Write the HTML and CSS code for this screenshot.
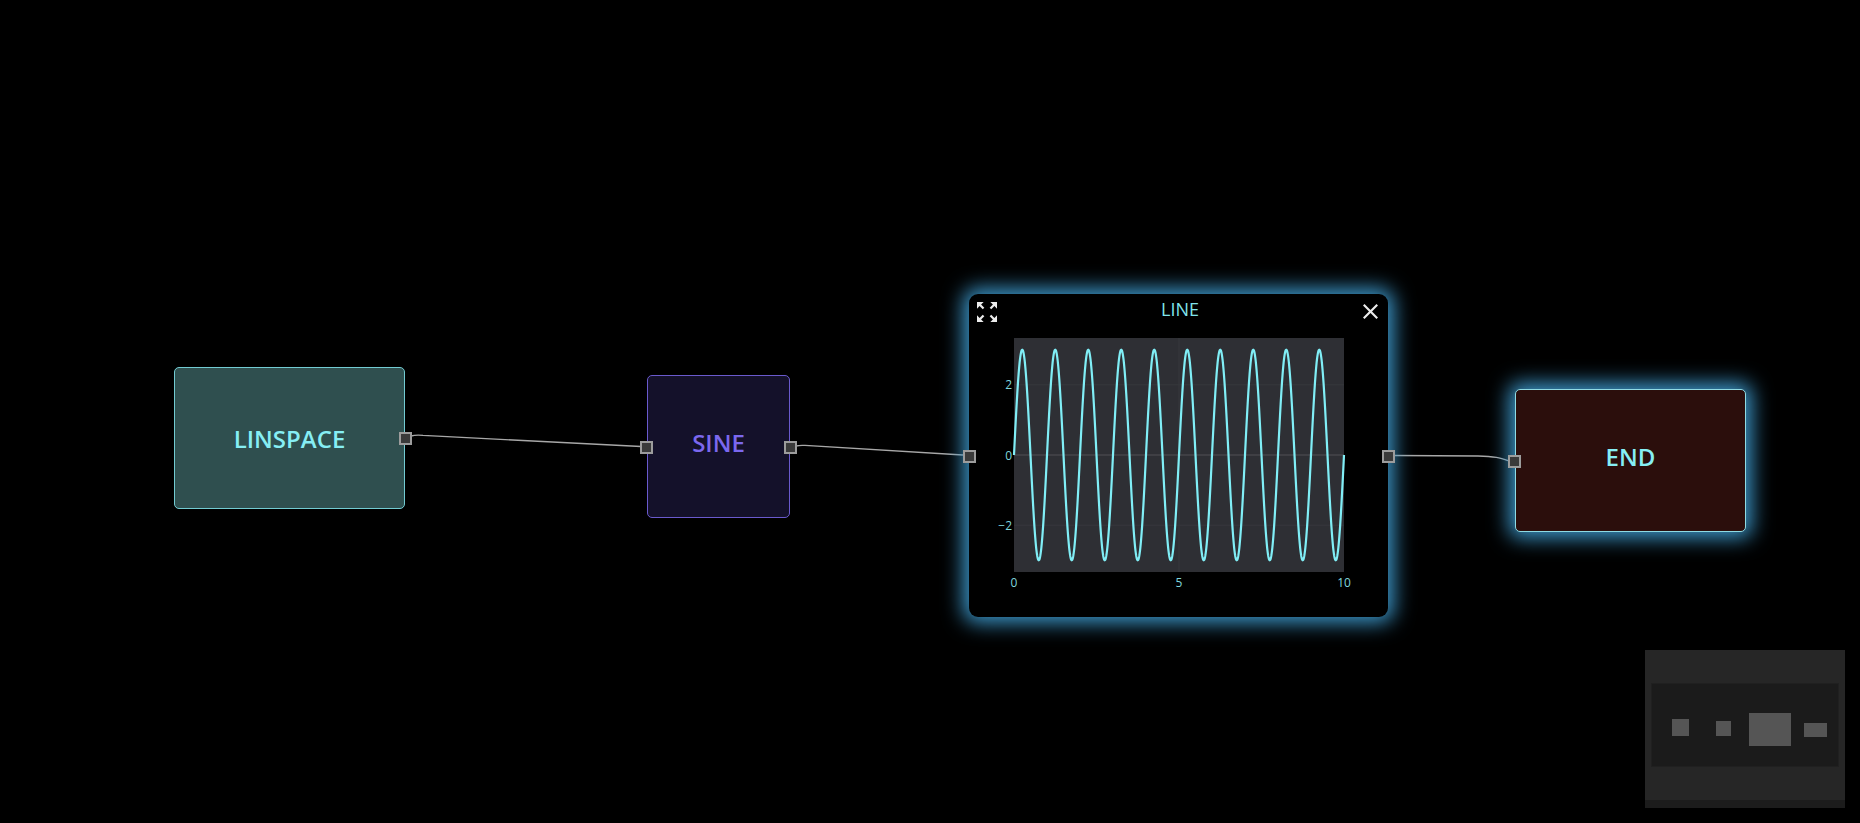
FILE: index.html
```html
<!DOCTYPE html>
<html>
  <head>
    <title>Flow</title>
    <link rel="stylesheet" href="styles.css">
  </head>
  <body>
    <div class="canvas">
      <svg class="edges" width="1860" height="823">
        <path d="M411 436 Q416 434.6 423 435.4 L641 446.5" />
        <path d="M796 446 Q800 445 805 445.4 L963 455" />
        <path d="M1395 455.5 L1478 456 C1495 456.3 1500 458 1509 461" />
      </svg>

      <div class="node linspace">
        <span class="label">LINSPACE</span>
        <span class="port port-out"></span>
      </div>

      <div class="node sine">
        <span class="port port-in"></span>
        <span class="label label-up">SINE</span>
        <span class="port port-out"></span>
      </div>

      <div class="chart-node">
        <span class="port port-in"></span>
        <div class="chart-head">
          <svg class="icon-expand" viewBox="3 3 18 18" width="20" height="20">
            <path d="M15 3l2.3 2.3-2.89 2.87 1.42 1.42L18.7 6.7 21 9V3h-6zM3 9l2.3-2.3 2.87 2.89 1.42-1.42L6.7 5.3 9 3H3v6zm6 12l-2.3-2.3 2.89-2.87-1.42-1.42L5.3 17.3 3 15v6h6zm12-6l-2.3 2.3-2.87-2.89-1.42 1.42 2.89 2.87L15 21h6v-6z" />
          </svg>
          <div class="chart-title">LINE</div>
          <svg class="icon-close" viewBox="5 5 14 14" width="15" height="15">
            <path d="M19 6.41L17.59 5 12 10.59 6.41 5 5 6.41 10.59 12 5 17.59 6.41 19 12 13.41 17.59 19 19 17.59 13.41 12z" />
          </svg>
        </div>
        <svg class="chart" width="419" height="279">
          <rect class="plot-bg" x="45" y="0" width="330" height="234" />
          <line class="grid" x1="45" y1="46.8" x2="375" y2="46.8" />
          <line class="grid" x1="45" y1="187.2" x2="375" y2="187.2" />
          <line class="grid" x1="210" y1="0" x2="210" y2="234" />
          <line class="zero" x1="45" y1="117" x2="375" y2="117" />
          <polyline id="wave" class="wave" points="" />
          <text class="tick" x="43" y="51" text-anchor="end">2</text>
          <text class="tick" x="43" y="121.5" text-anchor="end">0</text>
          <text class="tick" x="43" y="192" text-anchor="end">&minus;2</text>
          <text class="tick" x="45" y="248.5" text-anchor="middle">0</text>
          <text class="tick" x="210" y="248.5" text-anchor="middle">5</text>
          <text class="tick" x="375" y="248.5" text-anchor="middle">10</text>
        </svg>
        <span class="port port-out"></span>
      </div>

      <div class="node end">
        <span class="port port-in"></span>
        <span class="label label-up">END</span>
      </div>

      <div class="minimap">
        <svg width="200" height="150">
          <rect class="mini-view" x="6.5" y="33.5" width="187" height="83" />
          <rect class="mini-node" x="27" y="69" width="17" height="17" />
          <rect class="mini-node" x="71" y="71" width="15" height="15" />
          <rect class="mini-node" x="104" y="63" width="42" height="33" />
          <rect class="mini-node" x="159" y="73" width="23" height="14" />
        </svg>
        <div class="minimap-foot"></div>
      </div>
    </div>

    <script>
      let wave = document.getElementById("wave");
      let points = [];
      for (let i = 0; i <= 1000; i++) {
        let x = i / 100;
        let px = 45 + 33 * x;
        let py = 117 - 105.3 * Math.sin(2 * Math.PI * x);
        points.push(px.toFixed(2) + "," + py.toFixed(2));
      }
      wave.setAttribute("points", points.join(" "));
    </script>
  </body>
</html>
```

FILE: styles.css
```css
body {
  margin: 0;
  background: #000;
  font-family: "Open Sans", "DejaVu Sans", sans-serif;
  overflow: hidden;
}

.canvas {
  position: relative;
  width: 1860px;
  height: 823px;
}

.edges {
  position: absolute;
  left: 0;
  top: 0;
  pointer-events: none;
}

.edges path {
  fill: none;
  stroke: #a8a8a8;
  stroke-width: 1.3;
}

.node {
  position: absolute;
  box-sizing: border-box;
  display: flex;
  align-items: center;
  justify-content: center;
  border: 1px solid;
  border-radius: 5px;
  font-size: 24px;
  font-weight: 600;
}

.label-up {
  margin-bottom: 8px;
}

.linspace {
  left: 174px;
  top: 367px;
  width: 231px;
  height: 142px;
  background: #2f4f4f;
  border-color: #72cbd2;
  color: #86eef4;
}

.sine {
  left: 647px;
  top: 375px;
  width: 143px;
  height: 143px;
  background: #14112a;
  border-color: #6a5acd;
  color: #7b68ee;
}

.end {
  left: 1515px;
  top: 389px;
  width: 231px;
  height: 143px;
  background: #2b0e0c;
  border-color: #8fdbe3;
  color: #86eef4;
  box-shadow: 0 0 20px 6px #3c96c8;
}

.port {
  position: absolute;
  top: 50%;
  width: 13px;
  height: 13px;
  box-sizing: border-box;
  margin-top: -6px;
  background: #3a3a3a;
  border: 2px solid #9c9c9c;
}

.port-out {
  right: -8px;
}

.port-in {
  left: -8px;
}

.chart-node {
  position: absolute;
  left: 969px;
  top: 294px;
  width: 419px;
  height: 323px;
  background: #000;
  border-radius: 9px;
  box-shadow: 0 0 20px 6px #3c96c8;
}

.chart-node .port-in {
  left: -6px;
}

.chart-node .port-out {
  right: -7px;
}

.chart-head {
  display: flex;
  justify-content: space-between;
  align-items: flex-start;
  height: 44px;
  box-sizing: border-box;
  padding: 8px 10px 0 8px;
}

.icon-expand,
.icon-close {
  fill: #ececec;
  display: block;
}

.icon-close {
  margin-top: 2px;
}

.chart-title {
  margin-top: -3px;
  font-size: 18px;
  line-height: 20px;
  color: #80e4ec;
}

.chart {
  display: block;
}

.plot-bg {
  fill: #2e2f34;
}

.grid {
  stroke: #37383d;
  stroke-width: 1;
}

.zero {
  stroke: #505154;
  stroke-width: 1;
}

.wave {
  fill: none;
  stroke: #80eef6;
  stroke-width: 2.2;
}

.tick {
  font-family: "Open Sans", sans-serif;
  font-size: 12px;
  fill: #7fd6de;
}

.minimap {
  position: absolute;
  left: 1645px;
  top: 650px;
  width: 200px;
  background: #262626;
}

.minimap svg {
  display: block;
}

.mini-view {
  fill: #1b1b1b;
  stroke: #202020;
  stroke-width: 1;
}

.mini-node {
  fill: #555;
}

.minimap-foot {
  height: 8px;
  background: #1c1c1c;
}
```
